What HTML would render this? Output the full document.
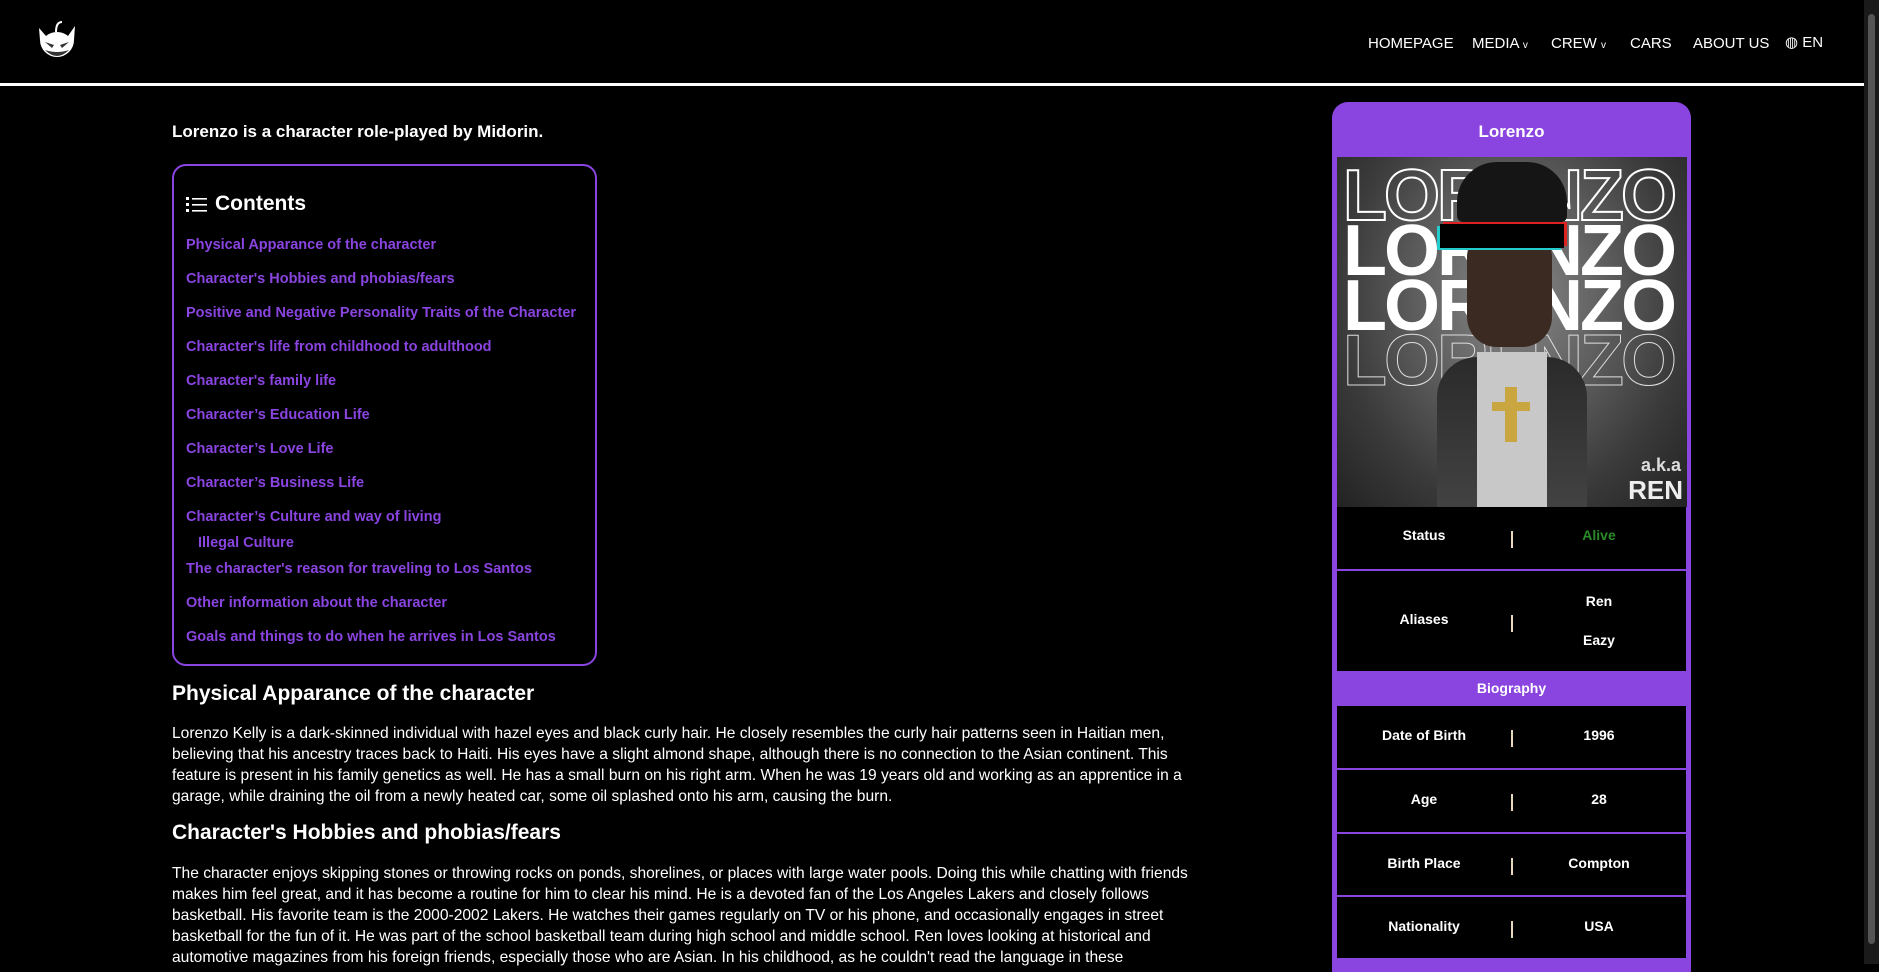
<!DOCTYPE html>
<html><head><meta charset="utf-8"><style>
*{margin:0;padding:0;box-sizing:border-box}
html,body{width:1879px;height:964px;overflow:hidden;background:#000;color:#fff;font-family:"Liberation Sans",sans-serif}
.nav{position:absolute;left:0;top:0;width:1864px;height:86px;border-bottom:3px solid #fff}
.logo{position:absolute;left:34px;top:18px}
.menu{position:absolute;top:35px;left:0;font-size:15px}
.menu span{position:absolute;white-space:nowrap}
.scroll{position:absolute;right:0;top:0;width:15px;height:964px;background:#1a1a1a}
.scroll div{position:absolute;left:4px;top:14px;width:7px;height:930px;background:#555;border-radius:4px}
.intro{position:absolute;left:172px;top:122px;font-weight:bold;font-size:17px}
.toc{position:absolute;left:172px;top:164px;width:425px;height:502px;border:2px solid #8a44e0;border-radius:14px}
.toc h3{position:absolute;left:12px;top:26px;font-size:21px;display:flex;align-items:center}
.toc a{position:absolute;left:12px;color:#8a44e0;font-weight:bold;font-size:14.5px;text-decoration:none;white-space:nowrap}
h2{position:absolute;left:172px;font-size:21px;font-weight:bold}
p{position:absolute;left:172px;font-size:15.6px;line-height:21px;white-space:nowrap}
.side{position:absolute;left:1332px;top:102px;width:359px;height:870px;background:#8a44e0;border-radius:16px 16px 0 0}
.side .t{position:absolute;left:0;width:359px;top:20px;text-align:center;font-weight:bold;font-size:17px}
.img{position:absolute;left:5px;top:55px;width:350px;height:350px;overflow:hidden;background:radial-gradient(ellipse at 50% 40%,#8a8a8a,#3a3a3a 70%,#222)}
.row{position:absolute;left:5px;width:349px;background:#000;font-weight:bold;font-size:14px}
.row .l,.row .v{position:absolute;width:174px;text-align:center}
.row .l{left:0}.row .v{left:175px}
.row .s{position:absolute;left:174px;width:2px;height:17px;background:#e8d8c0}
.bio{position:absolute;left:0;width:359px;top:569px;height:35px;text-align:center;font-weight:bold;font-size:14px;line-height:35px}
</style></head><body>
<div class="nav">
<svg class="logo" width="46" height="46" viewBox="0 0 46 46"><path d="M5 10 L12 18 A17 17 0 0 1 34 18 L41 8 L40 22 A17 17 0 1 1 6 22 Z" fill="#fff"/><path d="M22 14 Q22 4 28 4" stroke="#fff" stroke-width="2" fill="none"/><path d="M11 24 L20 27 L18 30 Z M35 24 L26 27 L28 30 Z" fill="#333"/><path d="M11 32 Q23 44 35 32 Q23 36 11 32 Z" fill="#333"/></svg>
<div class="menu">
<span style="left:1368px">HOMEPAGE</span>
<span style="left:1472px">MEDIA <small style="font-size:10px">v</small></span>
<span style="left:1551px">CREW <small style="font-size:10px">v</small></span>
<span style="left:1630px">CARS</span>
<span style="left:1693px">ABOUT US</span>
<span style="left:1785px;top:-2px">◍ EN</span>
</div>
</div>
<div class="scroll"><div></div></div>

<div class="intro">Lorenzo is a character role-played by Midorin.</div>
<div class="toc">
<h3><svg width="21" height="17" viewBox="0 0 21 17" style="margin-right:8px"><g fill="#fff"><rect x="0" y="1" width="3" height="3"/><rect x="0" y="7" width="3" height="3"/><rect x="0" y="13" width="3" height="3"/><rect x="6" y="2" width="15" height="1.6"/><rect x="6" y="8" width="15" height="1.6"/><rect x="6" y="14" width="15" height="1.6"/></g></svg>Contents</h3>
<a style="top:71px">Physical Apparance of the character</a>
<a style="top:105px">Character's Hobbies and phobias/fears</a>
<a style="top:139px">Positive and Negative Personality Traits of the Character</a>
<a style="top:173px">Character's life from childhood to adulthood</a>
<a style="top:207px">Character's family life</a>
<a style="top:241px">Character’s Education Life</a>
<a style="top:275px">Character’s Love Life</a>
<a style="top:309px">Character’s Business Life</a>
<a style="top:343px">Character’s Culture and way of living</a>
<a style="top:369px;left:24px">Illegal Culture</a>
<a style="top:395px">The character's reason for traveling to Los Santos</a>
<a style="top:429px">Other information about the character</a>
<a style="top:463px">Goals and things to do when he arrives in Los Santos</a>
</div>

<h2 style="top:682px">Physical Apparance of the character</h2>
<p style="top:723px">Lorenzo Kelly is a dark-skinned individual with hazel eyes and black curly hair. He closely resembles the curly hair patterns seen in Haitian men,<br>believing that his ancestry traces back to Haiti. His eyes have a slight almond shape, although there is no connection to the Asian continent. This<br>feature is present in his family genetics as well. He has a small burn on his right arm. When he was 19 years old and working as an apprentice in a<br>garage, while draining the oil from a newly heated car, some oil splashed onto his arm, causing the burn.</p>
<h2 style="top:821px">Character's Hobbies and phobias/fears</h2>
<p style="top:863px">The character enjoys skipping stones or throwing rocks on ponds, shorelines, or places with large water pools. Doing this while chatting with friends<br>makes him feel great, and it has become a routine for him to clear his mind. He is a devoted fan of the Los Angeles Lakers and closely follows<br>basketball. His favorite team is the 2000-2002 Lakers. He watches their games regularly on TV or his phone, and occasionally engages in street<br>basketball for the fun of it. He was part of the school basketball team during high school and middle school. Ren loves looking at historical and<br>automotive magazines from his foreign friends, especially those who are Asian. In his childhood, as he couldn't read the language in these</p>

<div class="side">
<div class="t">Lorenzo</div>
<div class="img">
<div style="position:absolute;left:6px;top:12px;font-size:72px;font-weight:bold;line-height:55px;letter-spacing:-3px">
<div style="color:transparent;-webkit-text-stroke:2px #fff">LORENZO</div>
<div style="color:#fff">LORENZO</div>
<div style="color:#fff">LORENZO</div>
<div style="color:transparent;-webkit-text-stroke:1px #ddd">LORENZO</div></div>
<div style="position:absolute;left:100px;top:200px;width:150px;height:160px;background:linear-gradient(#2a2a2a,#444);border-radius:40px 40px 0 0"></div>
<div style="position:absolute;left:140px;top:195px;width:70px;height:160px;background:#c8c8c8"></div>
<div style="position:absolute;left:130px;top:70px;width:85px;height:120px;background:#3a2a22;border-radius:30px"></div>
<div style="position:absolute;left:120px;top:5px;width:110px;height:60px;background:#151515;border-radius:40px 40px 6px 6px"></div>
<div style="position:absolute;left:103px;top:67px;width:124px;height:24px;background:#000;box-shadow:-3px 2px 0 #2cc,3px -2px 0 #d22"></div>
<div style="position:absolute;left:168px;top:230px;width:12px;height:55px;background:#c9a640"></div>
<div style="position:absolute;left:155px;top:245px;width:38px;height:9px;background:#c9a640"></div>
<div style="position:absolute;right:6px;top:298px;font-size:18px;font-weight:bold;color:#ddd">a.k.a</div>
<div style="position:absolute;right:4px;top:318px;font-size:26px;font-weight:bold;color:#eee">REN</div>
</div>
<div class="row" style="top:405px;height:62px"><div class="l" style="top:33%">Status</div><div class="s" style="top:39%"></div><div class="v" style="top:33%;color:#2a8a2a">Alive</div></div>
<div class="row" style="top:469px;height:100px"><div class="l" style="top:40px">Aliases</div><div class="s" style="top:44px"></div><div class="v" style="top:22px">Ren</div><div class="v" style="top:61px">Eazy</div></div>
<div class="bio">Biography</div>
<div class="row" style="top:604px;height:62px"><div class="l" style="top:21px">Date of Birth</div><div class="s" style="top:24px"></div><div class="v" style="top:21px">1996</div></div>
<div class="row" style="top:668px;height:62px"><div class="l" style="top:21px">Age</div><div class="s" style="top:24px"></div><div class="v" style="top:21px">28</div></div>
<div class="row" style="top:732px;height:61px"><div class="l" style="top:21px">Birth Place</div><div class="s" style="top:24px"></div><div class="v" style="top:21px">Compton</div></div>
<div class="row" style="top:795px;height:61px"><div class="l" style="top:21px">Nationality</div><div class="s" style="top:24px"></div><div class="v" style="top:21px">USA</div></div>
</div>
</body></html>
